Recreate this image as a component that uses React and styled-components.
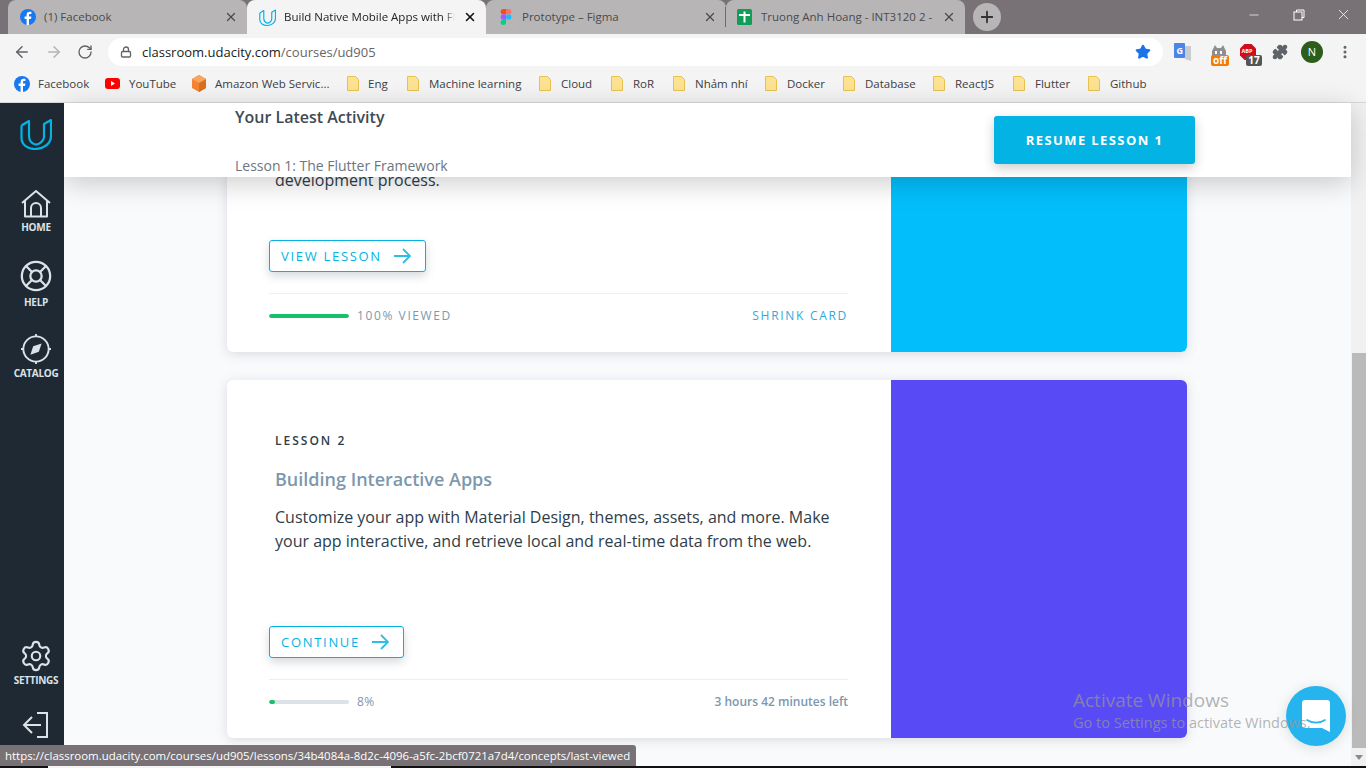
import styled, { createGlobalStyle } from "styled-components";
import {
  ArrowLeft,
  ArrowRight,
  RotateCw,
  Lock,
  Star,
  Puzzle,
  MoreVertical,
  X,
  Plus,
  Minus,
  LifeBuoy,
  Settings,
} from "lucide-react";

const GlobalStyle = createGlobalStyle`
  html, body {
    margin: 0;
    padding: 0;
    width: 1366px;
    height: 768px;
    overflow: hidden;
    background: #000;
    font-family: "Open Sans", "Noto Sans", sans-serif;
  }
  * { box-sizing: border-box; }
`;

const Screen = styled.div`
  position: relative;
  width: 1366px;
  height: 768px;
  display: flex;
  flex-direction: column;
  overflow: hidden;
`;

/* browser chrome */
const TabStrip = styled.div`
  height: 34px;
  background: #787276;
  display: flex;
  align-items: flex-end;
  padding-left: 8px;
  flex-shrink: 0;
`;

const Tab = styled.div`
  position: relative;
  width: ${(p) => p.$width}px;
  height: 34px;
  display: flex;
  align-items: center;
  gap: ${(p) => p.$gap || 8}px;
  padding: 0 9px 0 ${(p) => p.$left || 12}px;
  background: ${(p) => (p.$active ? "#f4f4f4" : "#b8b5b6")};
  border-radius: 8px 8px 0 0;
  font-size: 11.5px;
  color: ${(p) => (p.$active ? "#222" : "#4a4a4c")};
  white-space: nowrap;
  &::before {
    content: "";
    display: ${(p) => (p.$divider ? "block" : "none")};
    position: absolute;
    left: -1px;
    top: 7px;
    bottom: 7px;
    width: 1px;
    background: #6e6a6c;
  }
`;

const TabTitle = styled.span`
  flex: 1;
  margin-bottom: 2px;
  overflow: hidden;
  -webkit-mask-image: ${(p) =>
    p.$fade ? "linear-gradient(90deg, #000 94%, transparent)" : "none"};
`;

const NewTab = styled.div`
  width: 28px;
  height: 28px;
  margin: 0 0 3px 8px;
  border-radius: 50%;
  background: #b8b5b6;
  display: flex;
  align-items: center;
  justify-content: center;
  color: #333;
`;

const WindowControls = styled.div`
  margin-left: auto;
  align-self: flex-start;
  display: flex;
  color: #fff;
`;

const WindowButton = styled.div`
  width: 45px;
  height: 29px;
  display: flex;
  align-items: center;
  justify-content: center;
`;

const RestoreIcon = () => (
  <svg width="14" height="14" viewBox="0 0 14 14" fill="none" stroke="#fff" strokeWidth="1">
    <rect x="2" y="4" width="8" height="8" />
    <path d="M4.500 4V2H12V9.500H10" />
  </svg>
);

const Toolbar = styled.div`
  height: 34px;
  padding: 2px 0 0 13px;
  background: #f4f4f4;
  display: flex;
  align-items: center;
  flex-shrink: 0;
`;

const NavIcons = styled.div`
  display: flex;
  gap: 14px;
  width: 95px;
  align-items: center;
  color: #5f6368;
`;

const Omnibox = styled.div`
  width: 1055px;
  height: 28px;
  border-radius: 14px;
  background: #fff;
  display: flex;
  align-items: center;
  padding: 0 12px;
  font-size: 13px;
  color: #202124;
`;

const UrlTail = styled.span`
  color: #666;
`;

const LockSlot = styled.span`
  width: 22px;
  display: flex;
`;

const ExtIcons = styled.div`
  display: flex;
  align-items: center;
`;

const ExtSlot = styled.div`
  position: relative;
  width: ${(p) => p.$width}px;
  height: 20px;
  margin-left: ${(p) => p.$left}px;
  display: flex;
  align-items: center;
  justify-content: center;
`;

const ExtBadge = styled.span`
  position: absolute;
  right: ${(p) => p.$right}px;
  bottom: -4px;
  width: ${(p) => p.$width}px;
  height: 11px;
  border-radius: 2px;
  background: ${(p) => p.$bg};
  color: #fff;
  font-size: 10px;
  line-height: 11px;
  font-weight: 700;
  text-align: center;
`;

const Avatar = styled.div`
  width: 22px;
  height: 22px;
  border-radius: 50%;
  background: #2d5d1b;
  color: #fff;
  font-size: 11px;
  text-align: center;
  line-height: 22px;
`;

const BookmarkBar = styled.div`
  height: 35px;
  padding: 0 0 3px 14px;
  background: #f4f4f4;
  border-bottom: 1px solid #d8d8d8;
  display: flex;
  align-items: center;
  flex-shrink: 0;
`;

const Bookmark = styled.div`
  width: ${(p) => p.$width}px;
  display: flex;
  align-items: center;
  gap: ${(p) => p.$gap}px;
  font-size: 11.5px;
  color: #3c4043;
  white-space: nowrap;
`;

const FolderIcon = () => (
  <svg width="12" height="15" viewBox="0 0 12 15">
    <path d="M.5.5h8l3 3v11H.5z" fill="#fde293" stroke="#e8c24e" />
  </svg>
);

const FacebookIcon = () => (
  <svg width="16" height="16" viewBox="0 0 16 16">
    <circle cx="8" cy="8" r="8" fill="#1778f2" />
    <path d="M9 16V9.900h2l.4-2.400H9V6.100c0-.8.3-1.200 1.200-1.200h1.200V2.800c-.5-.1-1-.1-1.700-.1-1.900 0-3.100 1.100-3.100 3.100v1.700H4.600v2.400h2V16z" fill="#fff" />
  </svg>
);

const YoutubeIcon = () => (
  <svg width="15" height="15" viewBox="0 0 15 15">
    <rect y="2" width="15" height="11" rx="3" fill="#f00" />
    <path d="M6 5l4 2.500L6 10z" fill="#fff" />
  </svg>
);

const AwsIcon = () => (
  <svg width="16" height="17" viewBox="0 0 16 17">
    <path d="M8 0l7 4v9l-7 4-7-4V4z" fill="#f58534" />
    <path d="M8 8l7-4v9l-7 4z" fill="#d9701f" />
    <path d="M8 0l7 4-7 4-7-4z" fill="#f9a35d" />
  </svg>
);

const FigmaIcon = () => (
  <svg width="12" height="16" viewBox="0 0 12 18">
    <path d="M3 0h3v6H3a3 3 0 010-6z" fill="#f24e1e" />
    <path d="M6 0h3a3 3 0 010 6H6z" fill="#ff7262" />
    <path d="M3 6h3v6H3a3 3 0 010-6z" fill="#a259ff" />
    <circle cx="9" cy="9" r="3" fill="#1abcfe" />
    <path d="M3 12h3v3a3 3 0 11-3-3z" fill="#0acf83" />
  </svg>
);

const SheetsIcon = () => (
  <svg width="15" height="16" viewBox="0 0 15 16">
    <rect width="15" height="16" rx="1.500" fill="#0f9d58" />
    <path d="M6.500 2.500h2v2.500H13v2H8.500v6.500h-2V7H2V5h4.500z" fill="#fff" />
  </svg>
);

const UdacityLogo = ({ size = 32 }) => (
  <svg width={size} height={size} viewBox="0 0 32 32" fill="none" stroke="#02b3e4" strokeWidth="2.200" strokeLinejoin="round">
    <path d="M1.500 7.500L9 3v15c0 4 2 7 6 8.500" />
    <path d="M1.500 7.500V20c0 7 6.500 11 13.500 11 8 0 16-5 16-13V2l-7 4v13c0 4-5 8-9 7.500" />
  </svg>
);

const ForwardArrow = () => (
  <svg width="18" height="18" viewBox="0 0 18 18" fill="none" stroke="#2fbde8" strokeWidth="1.800">
    <path d="M1 9h16M10 2l7 7-7 7" />
  </svg>
);

/* page */
const Page = styled.div`
  flex: 1;
  min-height: 0;
  display: flex;
  background: #f9fafc;
`;

const Sidebar = styled.nav`
  width: 64px;
  padding: 15px 0 0 8px;
  background: #1f2933;
  display: flex;
  flex-direction: column;
  align-items: center;
  flex-shrink: 0;
  z-index: 3;
`;

const NavItem = styled.div`
  display: flex;
  flex-direction: column;
  align-items: center;
  margin-top: ${(p) => p.$top}px;
  color: #dbe2e8;
  font-size: 10px;
  font-weight: 700;
  letter-spacing: -0.3px;
  line-height: 12px;
  gap: ${(p) => p.$gap ?? 3}px;
`;

const NavBottom = styled.div`
  margin-top: auto;
  display: flex;
  flex-direction: column;
  align-items: center;
  padding-bottom: 27px;
`;

const Content = styled.div`
  flex: 1;
  min-width: 0;
  display: flex;
  flex-direction: column;
`;

const Header = styled.header`
  height: 74px;
  flex-shrink: 0;
  background: #fff;
  box-shadow: 0 6px 28px rgba(0, 0, 0, 0.2);
  z-index: 2;
  display: flex;
  justify-content: space-between;
  padding: 0 156px 0 171px;
`;

const HeaderText = styled.div`
  display: flex;
  flex-direction: column;
  justify-content: space-between;
  padding: 4px 0 2px;
`;

const ActivityTitle = styled.div`
  font-size: 16px;
  font-weight: 600;
  color: #404a54;
  line-height: 20px;
`;

const ActivitySub = styled.div`
  font-size: 14px;
  color: #6d7680;
  line-height: 19px;
`;

const ResumeButton = styled.div`
  width: 201px;
  height: 48px;
  margin-top: 13px;
  background: #02b3e4;
  border-radius: 3px;
  box-shadow: 0 4px 12px rgba(0, 0, 0, 0.2);
  color: #fff;
  font-size: 13px;
  font-weight: 700;
  letter-spacing: 1.4px;
  display: flex;
  align-items: center;
  justify-content: center;
`;

const CardList = styled.div`
  flex: 1;
  min-height: 0;
  overflow: hidden;
  display: flex;
  flex-direction: column;
  justify-content: flex-end;
  gap: 28px;
  padding: 0 164px 28px 163px;
`;

const Card = styled.article`
  display: flex;
  flex-shrink: 0;
  height: ${(p) => p.$height}px;
  background: #fff;
  border-radius: 6px;
  overflow: hidden;
  box-shadow: 0 2px 12px rgba(46, 60, 73, 0.16);
`;

const CardBody = styled.div`
  width: 664px;
  padding: 0 43px 0 42px;
  display: flex;
  flex-direction: column;
  justify-content: flex-end;
`;

const CardColor = styled.div`
  flex: 1;
  background: ${(p) => p.$color};
`;

const LessonLabel = styled.div`
  margin: 0 0 0 6px;
  font-size: 12px;
  font-weight: 600;
  letter-spacing: 2px;
  line-height: 16px;
  color: #2e3d49;
`;

const LessonTitle = styled.div`
  margin: 17px 0 0 6px;
  font-size: 18px;
  font-weight: 600;
  line-height: 26px;
  color: #7d97ad;
`;

const Description = styled.p`
  margin: 13px 0 0 6px;
  font-size: 16px;
  line-height: 24px;
  color: #2e3d49;
  flex-shrink: 0;
`;

const OutlineButton = styled.div`
  align-self: flex-start;
  flex-shrink: 0;
  height: 32px;
  margin-top: ${(p) => p.$top}px;
  padding: 0 14px 0 11px;
  display: flex;
  align-items: center;
  gap: 11px;
  background: #fff;
  border: 1px solid #02b3e4;
  border-radius: 3px;
  box-shadow: 0 4px 10px rgba(46, 60, 73, 0.2);
  color: #02b3e4;
  font-size: 13px;
  font-weight: 500;
  letter-spacing: 1.7px;
`;

const CardFooter = styled.div`
  height: 59px;
  margin-top: 21px;
  padding-bottom: 15px;
  border-top: 1px solid #eceff1;
  display: flex;
  align-items: center;
  justify-content: space-between;
  flex-shrink: 0;
`;

const ProgressGroup = styled.div`
  display: flex;
  align-items: center;
  gap: 8px;
`;

const ProgressTrack = styled.div`
  width: 80px;
  height: 4px;
  border-radius: 2px;
  background: #dbe2e8;
  overflow: hidden;
`;

const ProgressFill = styled.div`
  height: 100%;
  border-radius: 2px;
  background: #15c26b;
`;

const ProgressText = styled.span`
  font-size: 12px;
  font-weight: 500;
  letter-spacing: ${(p) => p.$spacing}px;
  color: #7d97ad;
`;

const ShrinkLink = styled.span`
  font-size: 12px;
  font-weight: 500;
  letter-spacing: 1.7px;
  color: #2faadd;
`;

const TimeLeft = styled.span`
  font-size: 12px;
  font-weight: 600;
  color: #7d97ad;
`;

const Scrollbar = styled.div`
  width: 15px;
  flex-shrink: 0;
  background: #f1f1f1;
  display: flex;
  flex-direction: column;
  z-index: 1;
`;

const ScrollSpace = styled.div`
  height: 250px;
`;

const ScrollThumb = styled.div`
  flex: 1;
  margin-left: 1px;
  background: #bababa;
`;

const ScrollArrow = styled.div`
  height: 18px;
  display: flex;
  align-items: center;
  justify-content: center;
  &::after {
    content: "";
    border-left: 4px solid transparent;
    border-right: 4px solid transparent;
    border-top: 5px solid #8a8a8a;
  }
`;

const Taskbar = styled.div`
  height: 2px;
  flex-shrink: 0;
  background: #111;
  display: flex;
  padding-left: 48px;
`;

const TaskbarSearch = styled.div`
  width: 343px;
  background: #f4f4f4;
`;

/* overlays */
const StatusBubble = styled.div`
  position: absolute;
  left: 0;
  bottom: 2px;
  width: 636px;
  height: 21px;
  padding-left: 5px;
  background: #787276;
  border-radius: 0 3px 0 0;
  color: #fff;
  font-size: 11.45px;
  line-height: 21px;
  white-space: nowrap;
  z-index: 5;
`;

const ActivateNote = styled.div`
  position: absolute;
  left: 1073px;
  top: 687px;
  color: rgba(150, 150, 150, 0.72);
  z-index: 6;
  font-size: 14.5px;
  line-height: 20px;
  white-space: nowrap;
`;

const ActivateTitle = styled.div`
  font-size: 19px;
  line-height: 26px;
`;

const ChatBubble = styled.div`
  position: absolute;
  left: 1286px;
  top: 686px;
  width: 60px;
  height: 60px;
  border-radius: 50%;
  background: #25b4ee;
  box-shadow: 0 2px 14px rgba(0, 0, 0, 0.12);
  display: flex;
  align-items: center;
  justify-content: center;
  z-index: 5;
`;

const bookmarks = [
  { label: "Facebook", icon: <FacebookIcon />, width: 91, gap: 8 },
  { label: "YouTube", icon: <YoutubeIcon />, width: 86, gap: 9 },
  { label: "Amazon Web Servic...", icon: <AwsIcon />, width: 156, gap: 8 },
  { label: "Eng", width: 60, gap: 9 },
  { label: "Machine learning", width: 132, gap: 10 },
  { label: "Cloud", width: 72, gap: 10 },
  { label: "RoR", width: 62, gap: 10 },
  { label: "Nhảm nhí", width: 92, gap: 10 },
  { label: "Docker", width: 78, gap: 10 },
  { label: "Database", width: 90, gap: 10 },
  { label: "ReactJS", width: 80, gap: 10 },
  { label: "Flutter", width: 75, gap: 10 },
  { label: "Github", width: 70, gap: 10 },
];

function App() {
  return (
    <Screen>
      <GlobalStyle />
      <TabStrip>
        <Tab $width={239}>
          <FacebookIcon />
          <TabTitle>(1) Facebook</TabTitle>
          <X size={14} strokeWidth={2.2} />
        </Tab>
        <Tab $width={239} $active>
          <UdacityLogo size={17} />
          <TabTitle $fade>Build Native Mobile Apps with Fl</TabTitle>
          <X size={14} strokeWidth={2.6} color="#111" />
        </Tab>
        <Tab $width={240} $left={14} $gap={10}>
          <FigmaIcon />
          <TabTitle>Prototype – Figma</TabTitle>
          <X size={14} strokeWidth={2.2} />
        </Tab>
        <Tab $width={239} $divider $left={11} $gap={9}>
          <SheetsIcon />
          <TabTitle>Truong Anh Hoang - INT3120 2 -</TabTitle>
          <X size={14} strokeWidth={2.2} />
        </Tab>
        <NewTab>
          <Plus size={18} strokeWidth={2.4} />
        </NewTab>
        <WindowControls>
          <WindowButton>
            <Minus size={14} strokeWidth={1.2} />
          </WindowButton>
          <WindowButton>
            <RestoreIcon />
          </WindowButton>
          <WindowButton>
            <X size={17} strokeWidth={1.1} />
          </WindowButton>
        </WindowControls>
      </TabStrip>

      <Toolbar>
        <NavIcons>
          <ArrowLeft size={18} />
          <ArrowRight size={18} color="#b4b4b4" />
          <RotateCw size={16} />
        </NavIcons>
        <Omnibox>
          <LockSlot>
            <Lock size={12} strokeWidth={2.6} color="#5f6368" />
          </LockSlot>
          classroom.udacity.com<UrlTail>/courses/ud905</UrlTail>
          <Star size={16} fill="#1a73e8" color="#1a73e8" style={{ marginLeft: "auto" }} />
        </Omnibox>
        <ExtIcons>
          <ExtSlot $width={20} $left={10}>
            <svg width="18" height="19" viewBox="0 0 18 19">
              <path d="M8 3h9v15l-6-2z" fill="#c9ccd0" />
              <rect width="11" height="15" rx="1" fill="#4a86e8" />
              <text x="2.500" y="10.500" fontSize="9" fontWeight="700" fill="#fff">G</text>
            </svg>
          </ExtSlot>
          <ExtSlot $width={20} $left={16}>
            <svg width="16" height="18" viewBox="0 0 16 18">
              <path d="M1 17V8l3-6 2 3h4l2-3 3 6v9z" fill="#8e8e8e" />
              <rect x="4" y="8" width="2" height="3" fill="#fff" />
              <rect x="9" y="8" width="2" height="3" fill="#fff" />
            </svg>
            <ExtBadge $bg="#f57c00" $width={18} $right={0}>off</ExtBadge>
          </ExtSlot>
          <ExtSlot $width={20} $left={9}>
            <svg width="18" height="18" viewBox="0 0 18 18">
              <path d="M5.500 1h7L17 5.500v7L12.500 17h-7L1 12.500v-7z" fill="#cf0d1e" />
              <text x="2.500" y="10" fontSize="5.500" fontWeight="700" fill="#fff">ABP</text>
            </svg>
            <ExtBadge $bg="#555" $width={16} $right={-4}>17</ExtBadge>
          </ExtSlot>
          <ExtSlot $width={16} $left={14}>
            <Puzzle size={16} fill="#5f6368" color="#5f6368" />
          </ExtSlot>
          <ExtSlot $width={22} $left={13}>
            <Avatar>N</Avatar>
          </ExtSlot>
          <ExtSlot $width={16} $left={14}>
            <MoreVertical size={16} strokeWidth={2.6} color="#5f6368" />
          </ExtSlot>
        </ExtIcons>
      </Toolbar>

      <BookmarkBar>
        {bookmarks.map((b) => (
          <Bookmark key={b.label} $width={b.width} $gap={b.gap}>
            {b.icon || <FolderIcon />}
            {b.label}
          </Bookmark>
        ))}
      </BookmarkBar>

      <Page>
        <Sidebar>
          <UdacityLogo size={32} />
          <NavItem $top={40}>
            <svg width="30" height="28" viewBox="0 0 30 28" fill="none" stroke="#dbe2e8" strokeWidth="2" strokeLinejoin="round">
              <path d="M1 13L15 1l14 12" />
              <path d="M4 11v15.500h22V11" />
              <path d="M10 26v-8a5 5 0 0110 0v8" />
            </svg>
            HOME
          </NavItem>
          <NavItem $top={26}>
            <LifeBuoy size={34} strokeWidth={1.6} />
            HELP
          </NavItem>
          <NavItem $top={26}>
            <svg width="30" height="30" viewBox="0 0 32 32" fill="none" stroke="#dbe2e8" strokeWidth="2">
              <circle cx="16" cy="16" r="13.500" />
              <path d="M16 0v3M16 29v3M0 16h3M29 16h3" />
              <path d="M22 10l-3 9-9 3 3-9z" fill="#dbe2e8" stroke="none" />
            </svg>
            CATALOG
          </NavItem>
          <NavBottom>
            <NavItem $top={0} $gap={1}>
              <Settings size={34} strokeWidth={1.5} />
              SETTINGS
            </NavItem>
            <NavItem $top={25}>
              <svg width="28" height="28" viewBox="0 0 28 28" fill="none" stroke="#dbe2e8" strokeWidth="2">
                <path d="M15 2h10v24H15" />
                <path d="M19 14H2M10 6l-8 8 8 8" />
              </svg>
            </NavItem>
          </NavBottom>
        </Sidebar>

        <Content>
          <Header>
            <HeaderText>
              <ActivityTitle>Your Latest Activity</ActivityTitle>
              <ActivitySub>Lesson 1: The Flutter Framework</ActivitySub>
            </HeaderText>
            <ResumeButton>RESUME LESSON 1</ResumeButton>
          </Header>
          <CardList>
            <Card $height={185}>
              <CardBody>
                <Description>development process.</Description>
                <OutlineButton $top={48}>
                  VIEW LESSON
                  <ForwardArrow />
                </OutlineButton>
                <CardFooter>
                  <ProgressGroup>
                    <ProgressTrack>
                      <ProgressFill style={{ width: "100%" }} />
                    </ProgressTrack>
                    <ProgressText $spacing={1.6}>100% VIEWED</ProgressText>
                  </ProgressGroup>
                  <ShrinkLink>SHRINK CARD</ShrinkLink>
                </CardFooter>
              </CardBody>
              <CardColor $color="#02bffb" />
            </Card>
            <Card $height={358}>
              <CardBody>
                <LessonLabel>LESSON 2</LessonLabel>
                <LessonTitle>Building Interactive Apps</LessonTitle>
                <Description>
                  Customize your app with Material Design, themes, assets, and more. Make
                  your app interactive, and retrieve local and real-time data from the web.
                </Description>
                <OutlineButton $top={73}>
                  CONTINUE
                  <ForwardArrow />
                </OutlineButton>
                <CardFooter>
                  <ProgressGroup>
                    <ProgressTrack>
                      <ProgressFill style={{ width: "8%" }} />
                    </ProgressTrack>
                    <ProgressText $spacing={0.4}>8%</ProgressText>
                  </ProgressGroup>
                  <TimeLeft>3 hours 42 minutes left</TimeLeft>
                </CardFooter>
              </CardBody>
              <CardColor $color="#584bf5" />
            </Card>
          </CardList>
        </Content>

        <Scrollbar>
          <ScrollSpace />
          <ScrollThumb />
          <ScrollArrow />
        </Scrollbar>
      </Page>
      <Taskbar>
        <TaskbarSearch />
      </Taskbar>

      <StatusBubble>
        https://classroom.udacity.com/courses/ud905/lessons/34b4084a-8d2c-4096-a5fc-2bcf0721a7d4/concepts/last-viewed
      </StatusBubble>
      <ChatBubble>
        <svg width="28" height="32" viewBox="0 0 28 32">
          <path d="M3 0h22a3 3 0 013 3v29l-8-4H3a3 3 0 01-3-3V3a3 3 0 013-3z" fill="#fff" />
          <path d="M5 20c5 3.500 13 3.500 18 0" fill="none" stroke="#25b4ee" strokeWidth="1.600" strokeLinecap="round" />
        </svg>
      </ChatBubble>
      <ActivateNote>
        <ActivateTitle>Activate Windows</ActivateTitle>
        Go to Settings to activate Windows.
      </ActivateNote>
    </Screen>
  );
}

export default App;
